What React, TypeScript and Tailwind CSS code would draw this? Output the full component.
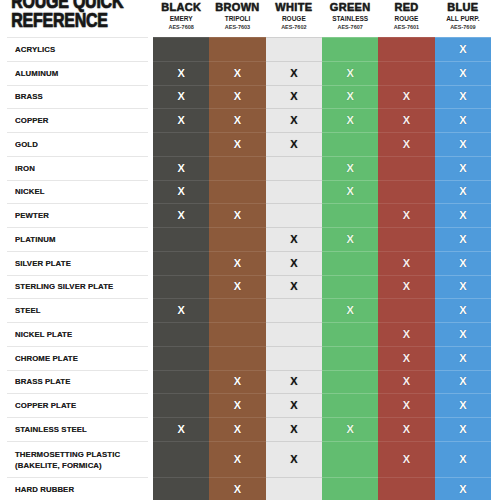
import React from 'react';

type Col = { name: string; sub: string; code: string; bg: string; mark: string; line: string };

const cols: Col[] = [
    { name: 'BLACK', sub: 'EMERY', code: 'AES-7608', bg: 'bg-[#4a4a46]', mark: 'text-white', line: 'border-white/10' },
    { name: 'BROWN', sub: 'TRIPOLI', code: 'AES-7603', bg: 'bg-[#8c5a3b]', mark: 'text-white', line: 'border-white/10' },
    { name: 'WHITE', sub: 'ROUGE', code: 'AES-7602', bg: 'bg-[#e8e8e8]', mark: 'text-[#111]', line: 'border-black/10' },
    { name: 'GREEN', sub: 'STAINLESS', code: 'AES-7607', bg: 'bg-[#62bd70]', mark: 'text-[#eafbe8]', line: 'border-white/20' },
    { name: 'RED', sub: 'ROUGE', code: 'AES-7601', bg: 'bg-[#a3493f]', mark: 'text-[#fbeeee]', line: 'border-white/10' },
    { name: 'BLUE', sub: 'ALL PURP.', code: 'AES-7609', bg: 'bg-[#4f9bdb]', mark: 'text-white', line: 'border-white/20' },
];

// 1 = marked, per column: black, brown, white, green, red, blue
const rows: { label: string[]; marks: number[]; tall?: boolean }[] = [
    { label: ['ACRYLICS'], marks: [0, 0, 0, 0, 0, 1] },
    { label: ['ALUMINUM'], marks: [1, 1, 1, 1, 0, 1] },
    { label: ['BRASS'], marks: [1, 1, 1, 1, 1, 1] },
    { label: ['COPPER'], marks: [1, 1, 1, 1, 1, 1] },
    { label: ['GOLD'], marks: [0, 1, 1, 0, 1, 1] },
    { label: ['IRON'], marks: [1, 0, 0, 1, 0, 1] },
    { label: ['NICKEL'], marks: [1, 0, 0, 1, 0, 1] },
    { label: ['PEWTER'], marks: [1, 1, 0, 0, 1, 1] },
    { label: ['PLATINUM'], marks: [0, 0, 1, 1, 0, 1] },
    { label: ['SILVER PLATE'], marks: [0, 1, 1, 0, 1, 1] },
    { label: ['STERLING SILVER PLATE'], marks: [0, 1, 1, 0, 1, 1] },
    { label: ['STEEL'], marks: [1, 0, 0, 1, 0, 1] },
    { label: ['NICKEL PLATE'], marks: [0, 0, 0, 0, 1, 1] },
    { label: ['CHROME PLATE'], marks: [0, 0, 0, 0, 1, 1] },
    { label: ['BRASS PLATE'], marks: [0, 1, 1, 0, 1, 1] },
    { label: ['COPPER PLATE'], marks: [0, 1, 1, 0, 1, 1] },
    { label: ['STAINLESS STEEL'], marks: [1, 1, 1, 1, 1, 1] },
    { label: ['THERMOSETTING PLASTIC', '(BAKELITE, FORMICA)'], marks: [0, 1, 1, 0, 1, 1], tall: true },
    { label: ['HARD RUBBER'], marks: [0, 1, 0, 0, 0, 1] },
];

export default function App() {
    return (
        <div className="w-[500px] h-[500px] overflow-hidden bg-white pr-[9px] font-['Liberation_Sans',Arial,sans-serif]">
            {/* header */}
            <div className="grid grid-cols-[153px_repeat(6,minmax(0,1fr))] h-[37px]">
                <div className="pl-[14px] -mt-[8px] whitespace-nowrap text-[#161616] font-black text-[20px] leading-[19px] tracking-[-0.3px] scale-x-[0.8] origin-left [-webkit-text-stroke:0.7px_#161616] [text-shadow:0_0_2px_rgba(0,0,0,0.45)]">
                    <div>ROUGE QUICK</div>
                    <div>REFERENCE</div>
                </div>
                {cols.map((c) => (
                    <div key={c.name} className="flex flex-col items-center pt-[1px] text-[#1a1a1a]">
                        <div className="font-black text-[11px] leading-[12px] tracking-[0.3px] [-webkit-text-stroke:0.3px_#1a1a1a] [text-shadow:0_0_1px_rgba(0,0,0,0.6)]">{c.name}</div>
                        <div className="font-bold text-[6.5px] leading-[9px] mt-[1px]">{c.sub}</div>
                        <div className="font-bold text-[5.5px] leading-[9px] text-[#333]">{c.code}</div>
                    </div>
                ))}
            </div>

            {rows.map((r) => (
                <div
                    key={r.label.join(' ')}
                    className={`grid grid-cols-[153px_repeat(6,minmax(0,1fr))] ${r.tall ? 'h-[36.5px]' : 'h-[23.75px]'}`}
                >
                    <div className="pl-[7px] pr-[5px]">
                        <div className="h-full border-t border-[#e6e6e6] flex flex-col justify-center pl-[8px] text-[#1e1e1e] font-bold text-[7.8px] leading-[11px] tracking-[0.1px] [text-shadow:0_0_0.5px_rgba(0,0,0,0.5)]">
                            {r.label.map((l) => (
                                <div key={l}>{l}</div>
                            ))}
                        </div>
                    </div>
                    {cols.map((c, i) => (
                        <div key={c.name} className={`${c.bg} border-t ${c.line} flex items-center justify-center`}>
                            {r.marks[i] ? (
                                <span className={`${c.mark} font-black text-[11px] leading-none [text-shadow:0_0_1px_rgba(0,0,0,0.35)]`}>X</span>
                            ) : null}
                        </div>
                    ))}
                </div>
            ))}
        </div>
    );
}
